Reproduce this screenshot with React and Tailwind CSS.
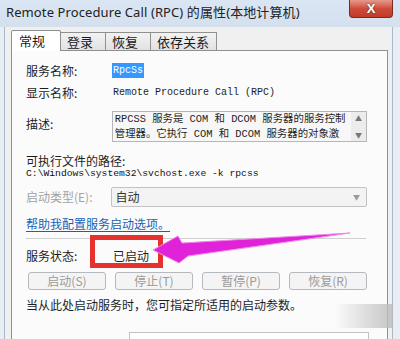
import React from 'react';

const ui = { fontFamily: '"Noto Sans CJK SC", "Noto Sans", sans-serif' };
const mono = { fontFamily: '"Liberation Mono", "Noto Sans CJK SC", monospace' };

const Tab = ({ label, active, w }) =>
  active ? (
    <div
      className={`relative z-10 -mb-px h-[21px] ${w} bg-white border border-b-0 border-[#8e8f8f] rounded-t-[2px] flex items-center pl-[7px] text-[13px] text-[#1a1a1a]`}
    >
      {label}
    </div>
  ) : (
    <div
      className={`h-[18px] ${w} bg-gradient-to-b from-[#f2f2f2] to-[#e2e2e2] border border-l-0 border-b-0 border-[#8e8f8f] flex items-center pl-[6px] text-[13px] text-[#1a1a1a]`}
    >
      {label}
    </div>
  );

const Btn = ({ children }) => (
  <div className="w-[78px] h-[18px] rounded-[3px] border border-[#b5b9bd] bg-[#f4f4f4] flex items-center justify-center text-[12px] text-[#9a9a9a]">
    {children}
  </div>
);

export default function App() {
  return (
    <div className="relative w-[400px] h-[339px] overflow-hidden bg-[#e9eef5]" style={ui}>
      {/* title bar */}
      <div className="h-[27px] flex items-start justify-between bg-gradient-to-b from-[#dbe6f4] to-[#d4e0ee]">
        <div className="pl-[6px] pt-[3px] text-[13px] text-[#222] tracking-[0.1px]" style={{ fontFamily: '"Noto Sans", "Noto Sans CJK SC", sans-serif' }}>
          Remote Procedure Call (RPC) 的属性(本地计算机)
        </div>
        <div className="mr-[7px] w-[44px] h-[18px] rounded-b-[4px] border border-t-0 border-[#7a2a22] bg-gradient-to-b from-[#e39a8c] via-[#cf4c3a] to-[#c23a28] flex items-center justify-center">
          <span className="text-white text-[13px] font-bold leading-none" style={{ fontFamily: '"Liberation Sans", sans-serif', textShadow: '0 0 2px #333' }}>
            X
          </span>
        </div>
      </div>

      {/* dialog body */}
      <div className="h-[312px] ml-[4px] mr-[7px] pl-[6px] pr-[4px] pt-[3px] bg-[#f0f0f0] border-l border-r border-[#a9b8cb] flex flex-col">
        <div className="flex items-end">
          <Tab label="常规" active w="w-[50px]" />
          <Tab label="登录" w="w-[45px]" />
          <Tab label="恢复" w="w-[45px]" />
          <Tab label="依存关系" w="w-[66px]" />
        </div>

        <div className="flex-1 bg-[#fbfbfb] border border-b-0 border-[#8e8f8f] pl-[14px] pr-[20px] flex flex-col text-[12px] text-[#1e1e1e]">
          <div className="mt-[12px] h-[15px] flex items-center">
            <div className="w-[86px]">服务名称:</div>
            <div className="h-[15px] px-[1px] bg-[#3399ff] text-white text-[10px] flex items-center" style={mono}>RpcSs</div>
          </div>

          <div className="mt-[7px] h-[15px] flex items-center">
            <div className="w-[87px]">显示名称:</div>
            <div className="text-[10px]" style={mono}>Remote Procedure Call (RPC)</div>
          </div>

          <div className="mt-[11px] flex items-start">
            <div className="w-[86px] pt-[4px]">描述:</div>
            <div className="w-[256px] h-[31px] border border-[#b6b6b6] bg-[#f7f7f7] flex">
              <div className="flex-1 pl-[2px] leading-[15px] text-[10.4px] whitespace-nowrap overflow-hidden" style={mono}>
                <div>RPCSS 服务是 COM 和 DCOM 服务器的服务控制</div>
                <div>管理器。它执行 COM 和 DCOM 服务器的对象激</div>
              </div>
              <div className="w-[15px] bg-[#ececec] flex flex-col items-center justify-between text-[7px] text-[#777] py-[1px]">
                <span>▲</span>
                <span>▼</span>
              </div>
            </div>
          </div>

          <div className="mt-[11px] h-[15px] flex items-center">可执行文件的路径:</div>
          <div className="h-[13px] flex items-center text-[9.7px] text-[#111]" style={mono}>
            C:\Windows\system32\svchost.exe -k rpcss
          </div>

          <div className="mt-[6px] flex items-center">
            <div className="w-[86px] text-[#a3a3a3]">启动类型(E):</div>
            <div className="w-[257px] h-[20px] border border-[#c2c2c2] rounded-[2px] bg-[#f3f3f3] flex items-center justify-between pl-[3px] pr-[6px]">
              <span className="text-[#333]">自动</span>
              <span className="text-[7px] text-[#999]">▼</span>
            </div>
          </div>

          <div className="mt-[9px] h-[15px] flex items-center">
            <span className="text-[#1a5fb4] underline underline-offset-2">帮助我配置服务启动选项。</span>
          </div>

          <div className="mt-[7px] h-px w-[340px] bg-[#d0d0d0]" />

          <div className="mt-[9px] h-[15px] flex items-center">
            <div className="w-[87px]">服务状态:</div>
            <div>已启动</div>
          </div>

          <div className="mt-[9px] pl-[2px] flex gap-[9px]">
            <Btn>启动(S)</Btn>
            <Btn>停止(T)</Btn>
            <Btn>暂停(P)</Btn>
            <Btn>恢复(R)</Btn>
          </div>

          <div className="mt-[7px] h-[15px] flex items-center">当从此处启动服务时，您可指定所适用的启动参数。</div>

          <div className="mt-[20px] ml-[103px] w-[240px] h-[20px] border border-[#c2c2c2] bg-white" />
        </div>
      </div>

      {/* annotation: red box */}
      <div className="absolute left-[90px] top-[235px] w-[73px] h-[33px] border-[5px] border-[#e5322d]" />

      {/* annotation: magenta arrow */}
      <svg className="absolute left-0 top-0" width="400" height="339" viewBox="0 0 400 339">
        <polygon
          points="153,250 178,236 182,243 350,233 188,256 179,263"
          fill="#e022d9"
          stroke="#f08ae8"
          strokeWidth="1"
          strokeLinejoin="round"
        />
      </svg>

      {/* watermark smudge */}
      <div className="absolute left-[335px] top-[304px] w-[58px] h-[24px] bg-gradient-to-r from-transparent via-[#d8d8d8] to-[#b8b8b8] opacity-80" />
    </div>
  );
}
